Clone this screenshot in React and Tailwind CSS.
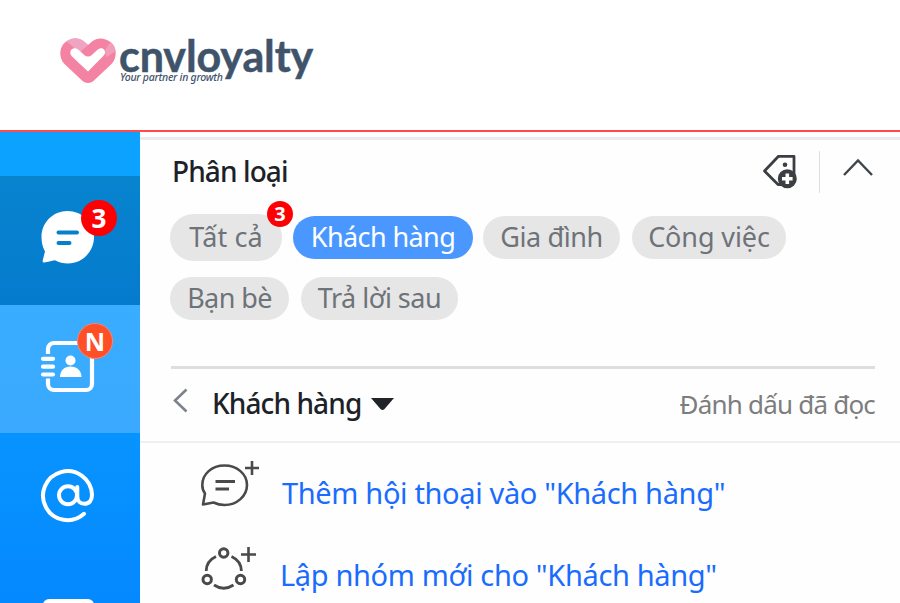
import React from "react";

function HeartLogo() {
  return (
    <svg width="56" height="46" viewBox="0 0 56 46" className="block shrink-0">
      <path
        d="M28 45c-3 0-5-1.500-7-3.500L4.500 26C-1.500 19.500-1 9 5.500 4 12-1 19-.5 24 3.500l4 3.500 4-3.500C37-.5 44-1 50.500 4 57 9 57.500 19.500 51.500 26L35 41.500C33 43.500 31 45 28 45z"
        fill="#f482a3"
      />
      <path d="M6.500 3.300C12.500-1 19-.5 24 3.500l4 3.500-9 8C15.500 11 11 7 6.500 3.300z" fill="#efa5c2" />
      <path d="M44 13.500 50.500 4c3 2.300 4.700 5.500 5.100 9L47 19z" fill="#f29dba" />
      <path
        d="M11.500 11.500c2-1.800 5-1.600 7 .3l6 5.400c2 1.600 5 1.600 7 0l6-5.400c2-1.900 5-2.100 6.500-.3s1.300 4.500-.7 6.500L28 33.500 12 18.500c-2-2-2.300-5.200-.5-7z"
        fill="#fff"
      />
    </svg>
  );
}

function Header() {
  return (
    <header className="flex h-[130px] shrink-0 items-start bg-white pl-[60px] pt-[38px]">
      <HeartLogo />
      <div className="ml-[3px] flex flex-col whitespace-nowrap text-[#3f546b]">
        <span className="-mt-[5px] h-[38px] font-['Lato',sans-serif] text-[43px] font-bold leading-[45px] tracking-[-0.1px] [-webkit-text-stroke:0.5px_#3f546b]">
          cnvloyalty
        </span>
        <span className="ml-px h-[14px] font-['Noto_Sans',sans-serif] text-[10.5px] font-medium italic leading-[13px] tracking-[-0.25px]">
          Your partner in growth
        </span>
      </div>
    </header>
  );
}

function Badge({ className, children }) {
  return (
    <span
      className={
        "absolute flex items-center justify-center rounded-full font-['Open_Sans',sans-serif] font-bold leading-none text-white " +
        className
      }
    >
      {children}
    </span>
  );
}

function Sidebar() {
  return (
    <aside className="flex w-[140px] shrink-0 flex-col bg-[#0893ff]">
      <div className="h-[44px] shrink-0 bg-[#0ba3ff]" />
      <div className="relative h-[129px] shrink-0 bg-linear-to-b from-[#0884cf] to-[#057bcd] pl-[40px] pt-[34px]">
        <svg width="56" height="56" viewBox="0 0 56 56" className="block">
          <path
            d="M27.500 1C42 1 54 12.500 54 27S42.500 53.500 28 53.500c-4.500 0-9-1-13-3.300-3.500.3-8 2-10.500 2.300-1.500 0-2.200-.8-1.800-2L5 41.500C2.500 37 1.500 32 1.500 27 1.500 12.500 13 1 27.500 1z"
            fill="#fff"
          />
          <path d="M18.500 22.500h18.500M18.500 33h11" stroke="#0780cc" strokeWidth="4" strokeLinecap="round" />
        </svg>
        <Badge className="left-[81px] top-[24px] h-[36px] w-[36px] bg-[#fe0003] text-[26px]">3</Badge>
      </div>
      <div className="relative h-[128px] shrink-0 bg-linear-to-b from-[#39adff] to-[#3aa9ff] pl-[40px] pt-[34px]">
        <svg width="56" height="56" viewBox="0 0 56 56" fill="none" className="block">
          <path
            d="M8 15V10a6 6 0 0 1 6-6h32a6 6 0 0 1 6 6v35a6 6 0 0 1-6 6H14a6 6 0 0 1-6-6v-5.500"
            stroke="#fff"
            strokeWidth="4.200"
          />
          <path d="M3 19.800h10M3 27.700h10M3 35.500h10" stroke="#fff" strokeWidth="4.200" strokeLinecap="round" />
          <circle cx="30.500" cy="21.500" r="5" fill="#fff" />
          <path d="M20 38c0-6.500 4.500-10.500 10.500-10.500S41.500 31.500 41.500 38z" fill="#fff" />
        </svg>
        <Badge className="left-[77px] top-[18px] h-[36px] w-[36px] border border-[#ff8370] bg-[#ff4f26] text-[25px]">
          N
        </Badge>
      </div>
      <div className="flex flex-1 flex-col items-start bg-linear-to-b from-[#0894ff] to-[#0588ff] pl-[40px] pt-[34px]">
        <svg width="56" height="56" viewBox="0 0 56 56" fill="none" className="block" stroke="#fff" strokeWidth="4" strokeLinecap="round">
          <circle cx="28" cy="28.300" r="9" />
          <path d="M37.300 20V29.300c0 5 3 7.500 7 7.500 5 0 7.700-3.500 7.700-9A24.500 24.500 0 1 0 44 46.800" />
        </svg>
        <div className="ml-[3px] mt-[76px] h-[12px] w-[51px] rounded-[6px] bg-white" />
      </div>
    </aside>
  );
}

function Chip({ className, children }) {
  return (
    <span
      className={
        "relative flex shrink-0 items-center justify-center whitespace-nowrap rounded-full pb-[2px] font-['Noto_Sans',sans-serif] text-[27px] leading-[30px] " +
        className
      }
    >
      {children}
    </span>
  );
}

function TagPlusIcon() {
  return (
    <svg width="36" height="36" viewBox="0 0 36 36" fill="none" className="block">
      <path d="M2.500 18 16.500 3.300H32V23L22 31.500H16z" stroke="#3b3f44" strokeWidth="2.800" strokeLinejoin="round" />
      <circle cx="23" cy="11.800" r="2.300" fill="#3b3f44" />
      <circle cx="25.300" cy="25.800" r="9.500" fill="#3b3f44" />
      <path d="M25.300 20.500v10.600M20 25.800h10.600" stroke="#fff" strokeWidth="3.600" />
    </svg>
  );
}

function Categories() {
  return (
    <section className="flex h-[228px] shrink-0 flex-col pl-[31px]">
      <div className="flex h-[74px] shrink-0 items-start">
        <h2 className="w-[590px] pl-[1px] pt-[13px] font-['Noto_Sans',sans-serif] text-[28px] font-medium leading-[36px] tracking-[-0.9px] text-[#1d2228]">
          Phân loại
        </h2>
        <div className="ml-[1px] pt-[13px]">
          <TagPlusIcon />
        </div>
        <div className="ml-[21px] mt-[11px] h-[42px] w-px bg-[#dcdfe3]" />
        <svg width="34" height="22" viewBox="0 0 34 22" fill="none" className="ml-[21px] mt-[17px]">
          <path d="M3 18 17 3.500 31 18" stroke="#3f454c" strokeWidth="2.400" />
        </svg>
      </div>
      <div className="-ml-px flex h-[47px] shrink-0 items-center text-[#6e7378]">
        <Chip className="h-[47px] w-[112px] bg-[#e6e6e7] tracking-[0.1px]">
          Tất cả
          <Badge className="-top-[13px] left-[97px] h-[26px] w-[26px] bg-[#fe0003] text-[20px]">3</Badge>
        </Chip>
        <Chip className="ml-[11px] h-[43px] w-[180px] bg-[#4a98ff] tracking-[-0.6px] text-white">Khách hàng</Chip>
        <Chip className="ml-[10px] h-[43px] w-[137px] bg-[#e6e6e7] tracking-[-0.4px]">Gia đình</Chip>
        <Chip className="ml-[12px] h-[43px] w-[154px] bg-[#e6e6e7] tracking-[-0.1px]">Công việc</Chip>
      </div>
      <div className="-ml-px mt-[16px] flex h-[43px] shrink-0 items-center text-[#6e7378]">
        <Chip className="h-[43px] w-[119px] bg-[#e6e6e7] tracking-[-0.6px]">Bạn bè</Chip>
        <Chip className="ml-[12px] h-[43px] w-[157px] bg-[#e6e6e7] tracking-[-0.5px]">Trả lời sau</Chip>
      </div>
      <div className="mt-[46px] h-[3px] w-[704px] shrink-0 bg-[#dddee0]" />
    </section>
  );
}

function FilterBar() {
  return (
    <section className="flex h-[75px] shrink-0 items-start border-b-2 border-[#eeeff1] pl-[32px] pr-[25px]">
      <svg width="16" height="28" viewBox="0 0 16 28" fill="none" className="mt-[19px] shrink-0">
        <path d="M14.500 2.500 3 13.500 14.500 24.500" stroke="#7d838e" strokeWidth="2.600" />
      </svg>
      <h3 className="ml-[24px] w-[149px] whitespace-nowrap pt-[17px] font-['Noto_Sans',sans-serif] text-[28px] font-medium leading-[36px] tracking-[-0.9px] text-[#1d2228]">
        Khách hàng
      </h3>
      <svg width="24" height="16" viewBox="0 0 24 16" className="ml-[10px] mt-[28px] shrink-0">
        <path d="M0 2h23L13.500 13q-2 2-4 0z" fill="#202327" />
      </svg>
      <span className="ml-auto whitespace-nowrap pt-[18px] font-['Noto_Sans',sans-serif] text-[26px] leading-[36px] tracking-[-0.8px] text-[#7d7d7f]">
        Đánh dấu đã đọc
      </span>
    </section>
  );
}

function ChatPlusIcon() {
  return (
    <svg width="60" height="50" viewBox="0 0 60 50" fill="none" stroke="#4a4a4c" className="block shrink-0">
      <path
        d="M24.500 5.500C37 5.500 47 14 47 25S37 45 24.500 45c-4 0-7.500-.8-11-2.500L3 44.500 5 33.500C3 31 2.300 28 2.300 25c0-11 9.500-19.500 22.200-19.500z"
        strokeWidth="2.600"
        strokeLinejoin="round"
      />
      <path d="M15.500 21.500H35M15.500 29H29" strokeWidth="2.800" />
      <path d="M52 1v14M45 8h14" strokeWidth="2.600" />
    </svg>
  );
}

function GroupPlusIcon() {
  return (
    <svg width="60" height="50" viewBox="0 0 60 50" fill="none" stroke="#4a4a4c" className="block shrink-0">
      <g strokeWidth="3">
        <circle cx="23.700" cy="7" r="4.200" />
        <circle cx="7.200" cy="33.500" r="4.200" />
        <circle cx="40.500" cy="33.500" r="4.200" />
      </g>
      <path d="M16 10.500C9.500 13.500 6.300 18.500 6.200 25M31.500 10.500C38 13.500 41.300 18.500 41.400 25M14 39c6.500 4.300 13 4.300 19.500 0" strokeWidth="2.800" />
      <path d="M48.500 1v15M41 8.500h15" strokeWidth="2.600" />
    </svg>
  );
}

function Actions() {
  return (
    <section className="flex flex-1 flex-col overflow-hidden pl-[60px] font-['Noto_Sans',sans-serif] text-[29px] leading-[40px] tracking-[-0.35px] text-[#1a6cff]">
      <div className="flex h-[82px] shrink-0 items-start pt-[17px]">
        <ChatPlusIcon />
        <span className="ml-[22px] mt-[13px] whitespace-nowrap">Thêm hội thoại vào "Khách hàng"</span>
      </div>
      <div className="flex h-[82px] shrink-0 items-start pt-[21px]">
        <GroupPlusIcon />
        <span className="ml-[20px] mt-[9px] whitespace-nowrap">Lập nhóm mới cho "Khách hàng"</span>
      </div>
    </section>
  );
}

export default function App() {
  return (
    <div className="flex h-[603px] w-[900px] flex-col overflow-hidden bg-white">
      <Header />
      <div className="h-[2px] shrink-0 bg-[#ff4b4b]" />
      <div className="flex flex-1 overflow-hidden">
        <Sidebar />
        <main className="flex w-[760px] flex-col bg-[#fefefe]">
          <div className="mt-[5px] h-[3px] shrink-0 bg-[#ebebec]" />
          <Categories />
          <FilterBar />
          <Actions />
        </main>
      </div>
    </div>
  );
}
